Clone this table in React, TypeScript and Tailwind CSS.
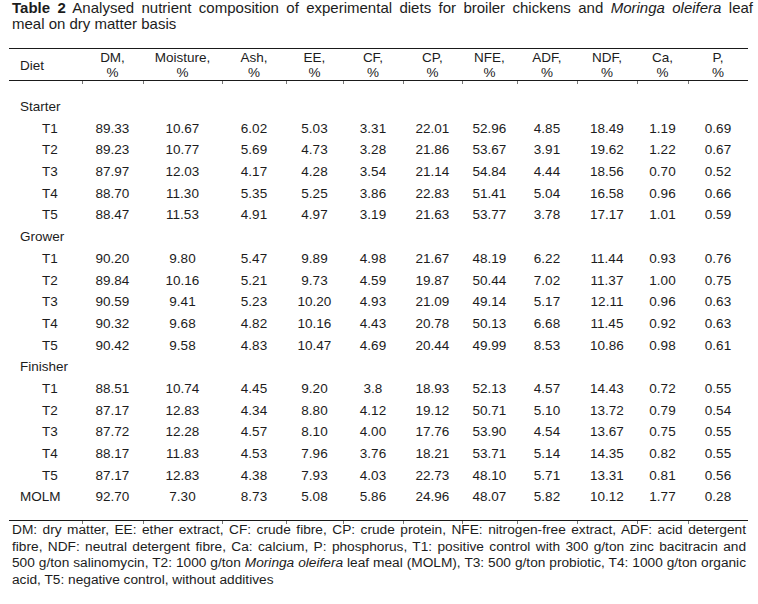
import React from "react";

const headers: [string, string][] = [
  ["DM,", "%"],
  ["Moisture,", "%"],
  ["Ash,", "%"],
  ["EE,", "%"],
  ["CF,", "%"],
  ["CP,", "%"],
  ["NFE,", "%"],
  ["ADF,", "%"],
  ["NDF,", "%"],
  ["Ca,", "%"],
  ["P,", "%"],
];

type Row = { label: string; kind: "group" | "t" | "m"; vals?: string[] };

const rows: Row[] = [
  { label: "Starter", kind: "group" },
  { label: "T1", kind: "t", vals: "89.33 10.67 6.02 5.03 3.31 22.01 52.96 4.85 18.49 1.19 0.69".split(" ") },
  { label: "T2", kind: "t", vals: "89.23 10.77 5.69 4.73 3.28 21.86 53.67 3.91 19.62 1.22 0.67".split(" ") },
  { label: "T3", kind: "t", vals: "87.97 12.03 4.17 4.28 3.54 21.14 54.84 4.44 18.56 0.70 0.52".split(" ") },
  { label: "T4", kind: "t", vals: "88.70 11.30 5.35 5.25 3.86 22.83 51.41 5.04 16.58 0.96 0.66".split(" ") },
  { label: "T5", kind: "t", vals: "88.47 11.53 4.91 4.97 3.19 21.63 53.77 3.78 17.17 1.01 0.59".split(" ") },
  { label: "Grower", kind: "group" },
  { label: "T1", kind: "t", vals: "90.20 9.80 5.47 9.89 4.98 21.67 48.19 6.22 11.44 0.93 0.76".split(" ") },
  { label: "T2", kind: "t", vals: "89.84 10.16 5.21 9.73 4.59 19.87 50.44 7.02 11.37 1.00 0.75".split(" ") },
  { label: "T3", kind: "t", vals: "90.59 9.41 5.23 10.20 4.93 21.09 49.14 5.17 12.11 0.96 0.63".split(" ") },
  { label: "T4", kind: "t", vals: "90.32 9.68 4.82 10.16 4.43 20.78 50.13 6.68 11.45 0.92 0.63".split(" ") },
  { label: "T5", kind: "t", vals: "90.42 9.58 4.83 10.47 4.69 20.44 49.99 8.53 10.86 0.98 0.61".split(" ") },
  { label: "Finisher", kind: "group" },
  { label: "T1", kind: "t", vals: "88.51 10.74 4.45 9.20 3.8 18.93 52.13 4.57 14.43 0.72 0.55".split(" ") },
  { label: "T2", kind: "t", vals: "87.17 12.83 4.34 8.80 4.12 19.12 50.71 5.10 13.72 0.79 0.54".split(" ") },
  { label: "T3", kind: "t", vals: "87.72 12.28 4.57 8.10 4.00 17.76 53.90 4.54 13.67 0.75 0.55".split(" ") },
  { label: "T4", kind: "t", vals: "88.17 11.83 4.53 7.96 3.76 18.21 53.71 5.14 14.35 0.82 0.55".split(" ") },
  { label: "T5", kind: "t", vals: "87.17 12.83 4.38 7.93 4.03 22.73 48.10 5.71 13.31 0.81 0.56".split(" ") },
  { label: "MOLM", kind: "m", vals: "92.70 7.30 8.73 5.08 5.86 24.96 48.07 5.82 10.12 1.77 0.28".split(" ") },
];

const GRID =
  "grid grid-cols-[73px_61px_79px_64px_57px_60px_59px_55px_60px_60px_51px_60px]";

function Ticks() {
  return (
    <div className={GRID + " h-[3px]"}>
      {Array.from({ length: 12 }).map((_, i) => (
        <div key={i} className={i === 0 ? "" : "border-l border-[#777]"} />
      ))}
    </div>
  );
}

export default function App() {
  return (
    <div
      className="w-[758px] h-[604px] bg-white text-[#1c1c1c] overflow-hidden"
      style={{ fontFamily: '"Liberation Sans", Arial, sans-serif' }}
    >
      {/* Title */}
      <div className="ml-[12px] w-[741px] text-[15px] leading-[16px]">
        <div className="text-justify [text-align-last:justify]">
          <span className="font-bold">Table 2</span> Analysed nutrient composition of experimental diets for broiler chickens and{" "}
          <i>Moringa oleifera</i> leaf
        </div>
        <div>meal on dry matter basis</div>
      </div>

      {/* Table */}
      <div className="ml-[9px] w-[739px] mt-[16px] text-[13.5px]">
        <div className="border-t border-b border-[#1a1a1a]">
          <div className={GRID + " h-[31px] leading-[15px]"}>
            <div className="flex items-center pl-[11px] pt-[2px]">Diet</div>
            {headers.map(([a, b], i) => (
              <div key={i} className="flex flex-col items-center justify-center">
                <span>{a}</span>
                <span>{b}</span>
              </div>
            ))}
          </div>
        </div>
        <Ticks />
        <div className="mt-[12px]">
          {rows.map((r, ri) => (
            <div key={ri} className={GRID + " h-[21.7px] leading-[21.7px]"}>
              <div
                className={
                  r.kind === "t" ? "pl-[33px] whitespace-nowrap" : "pl-[11px] whitespace-nowrap"
                }
              >
                {r.label}
              </div>
              {r.vals
                ? r.vals.map((v, vi) => (
                    <div key={vi} className="text-center">
                      {v}
                    </div>
                  ))
                : null}
            </div>
          ))}
        </div>
        <div className="mt-[12px] border-t border-[#1a1a1a]" />
        <Ticks />
      </div>

      {/* Footer */}
      <div className="ml-[12px] w-[734px] -mt-[2px] text-[13.7px] leading-[16.7px]">
        <div className="text-justify [text-align-last:justify]">
          DM: dry matter, EE: ether extract, CF: crude fibre, CP: crude protein, NFE: nitrogen-free extract, ADF: acid detergent
        </div>
        <div className="text-justify [text-align-last:justify]">
          fibre, NDF: neutral detergent fibre, Ca: calcium, P: phosphorus, T1: positive control with 300 g/ton zinc bacitracin and
        </div>
        <div className="text-justify [text-align-last:justify]">
          500 g/ton salinomycin, T2: 1000 g/ton <i>Moringa oleifera</i> leaf meal (MOLM), T3: 500 g/ton probiotic, T4: 1000 g/ton organic
        </div>
        <div>acid, T5: negative control, without additives</div>
      </div>
    </div>
  );
}
